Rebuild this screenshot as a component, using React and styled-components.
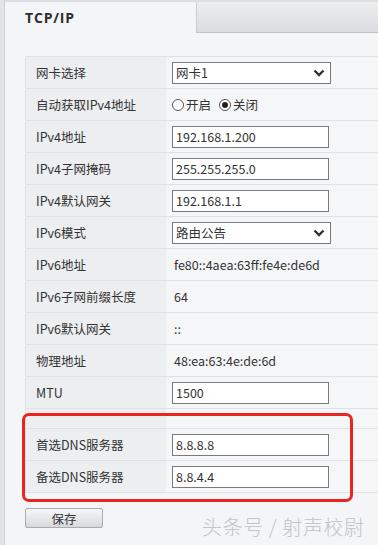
import React from 'react';
import styled, { createGlobalStyle } from 'styled-components';

const GlobalStyle = createGlobalStyle`
    html, body {
        margin: 0;
        padding: 0;
        background: #f4f5f7;
        overflow: hidden;
    }
    * { box-sizing: border-box; }
`

const font = `"Noto Sans CJK SC", "Open Sans", sans-serif`

const rows = [
    { label: '网卡选择', type: 'select', value: '网卡1' },
    { label: '自动获取IPv4地址', type: 'radio' },
    { label: 'IPv4地址', type: 'input', value: '192.168.1.200' },
    { label: 'IPv4子网掩码', type: 'input', value: '255.255.255.0' },
    { label: 'IPv4默认网关', type: 'input', value: '192.168.1.1' },
    { label: 'IPv6模式', type: 'select', value: '路由公告' },
    { label: 'IPv6地址', type: 'text', value: 'fe80::4aea:63ff:fe4e:de6d' },
    { label: 'IPv6子网前缀长度', type: 'text', value: '64' },
    { label: 'IPv6默认网关', type: 'text', value: '::' },
    { label: '物理地址', type: 'text', value: '48:ea:63:4e:de:6d' },
    { label: 'MTU', type: 'input', value: '1500' }
]

const dns = [
    { label: '首选DNS服务器', type: 'input', value: '8.8.8.8' },
    { label: '备选DNS服务器', type: 'input', value: '8.8.4.4' }
]

export default function App() {
    return (
        <Page>
            <GlobalStyle />
            <SideStrip />
            <Main>
                <TabBar>
                    <Tab>TCP/IP</Tab>
                    <TabRest />
                </TabBar>
                <Content>
                    <Table>
                        {rows.map((row, i) => (
                            <Row key={i} row={row} />
                        ))}
                        <EmptyRow><Label /><Cell /></EmptyRow>
                        <DnsGroup>
                            {dns.map((row, i) => (
                                <Row key={i} row={row} />
                            ))}
                        </DnsGroup>
                    </Table>
                    <Footer>
                        <SaveBtn>保存</SaveBtn>
                        <Watermark>头条号 / 射声校尉</Watermark>
                    </Footer>
                </Content>
            </Main>
        </Page>
    );
}

function Row({ row }) {
    return (
        <TableRow>
            <Label>{row.label}</Label>
            <Cell>
                {row.type === 'select' && (
                    <Select>
                        <span>{row.value}</span>
                        <svg width="12" height="8" viewBox="0 0 12 8">
                            <path d="M1.5 1.5 L6 6 L10.5 1.5" fill="none" stroke="#333" strokeWidth="2.4" />
                        </svg>
                    </Select>
                )}
                {row.type === 'input' && <Input>{row.value}</Input>}
                {row.type === 'text' && <Plain>{row.value}</Plain>}
                {row.type === 'radio' && (
                    <Radios>
                        <RadioItem><RadioDot /> 开启</RadioItem>
                        <RadioItem><RadioDot checked /> 关闭</RadioItem>
                    </Radios>
                )}
            </Cell>
        </TableRow>
    )
}

const Page = styled.div`
    display: flex;
    width: 378px;
    height: 545px;
    font-family: ${font};
    color: #333;
`
const SideStrip = styled.div`
    width: 5px;
    flex-shrink: 0;
    background: #e3e4e6;
    border-right: 1px solid #cfd1d4;
`
const Main = styled.div`
    flex: 1;
    display: flex;
    flex-direction: column;
    min-width: 0;
`
const TabBar = styled.div`
    display: flex;
    height: 33px;
    border-top: 2px solid #dcdee1;
`
const Tab = styled.div`
    width: 191px;
    padding: 6px 0 0 20px;
    font-family: "Open Sans", "DejaVu Sans", sans-serif;
    font-weight: 700;
    font-size: 14px;
    letter-spacing: 0.8px;
    color: #2e2e2e;
    background: #f4f5f7;
`
const TabRest = styled.div`
    flex: 1;
    background: linear-gradient(#eceef0, #d9dbde);
    border-left: 1px solid #c9cbce;
    border-bottom: 1px solid #bfc1c4;
`
const Content = styled.div`
    padding: 23px 0 0 20px;
    flex: 1;
    display: flex;
    flex-direction: column;
`
const Table = styled.div`
    display: flex;
    flex-direction: column;
    border-top: 1px solid #dfe1e4;
    border-left: 1px solid #dfe1e4;
`
const TableRow = styled.div`
    display: grid;
    grid-template-columns: 140px 1fr;
    height: 32px;
    border-bottom: 1px solid #dfe1e4;
`
const EmptyRow = styled(TableRow)`
    height: 20px;
`
const Label = styled.div`
    display: flex;
    align-items: center;
    padding-left: 10px;
    font-size: 12.5px;
    background: #eceef0;
    white-space: nowrap;
`
const Cell = styled.div`
    display: flex;
    align-items: center;
    padding-left: 6px;
    background: #f5f6f8;
    font-size: 12.5px;
`
const Select = styled.div`
    width: 159px;
    height: 22px;
    display: flex;
    align-items: center;
    justify-content: space-between;
    padding: 0 5px 0 3px;
    background: #fff;
    border: 1px solid #7a7a7a;
`
const Input = styled.div`
    width: 157px;
    height: 22px;
    display: flex;
    align-items: center;
    padding-left: 3px;
    background: #fff;
    border: 1px solid #7a7a7a;
`
const Plain = styled.div`
    padding-left: 2px;
`
const Radios = styled.div`
    display: flex;
    align-items: center;
    gap: 8px;
`
const RadioItem = styled.label`
    display: flex;
    align-items: center;
    gap: 2px;
`
const RadioDot = styled.span`
    width: 12px;
    height: 12px;
    border-radius: 50%;
    border: 1px solid #555;
    background: #fff;
    display: flex;
    align-items: center;
    justify-content: center;
    &::after {
        content: '';
        width: 6px;
        height: 6px;
        border-radius: 50%;
        background: ${p => (p.checked ? '#222' : 'transparent')};
    }
`
const DnsGroup = styled.div`
    position: relative;
    display: flex;
    flex-direction: column;
    &::after {
        content: '';
        position: absolute;
        left: -4px;
        top: -16px;
        width: 325px;
        bottom: -9px;
        border: 3px solid #e8251f;
        border-radius: 7px;
        pointer-events: none;
    }
`
const Footer = styled.div`
    display: flex;
    align-items: flex-start;
    margin-top: 15px;
`
const SaveBtn = styled.button`
    width: 78px;
    height: 20px;
    padding: 0;
    font-family: ${font};
    font-size: 12.5px;
    color: #333;
    border: 1px solid #a9abae;
    border-radius: 2px;
    background: linear-gradient(#f7f7f8, #d7d9dc);
    display: flex;
    align-items: center;
    justify-content: center;
`
const Watermark = styled.div`
    margin: 4px 0 0 99px;
    font-size: 20px;
    font-weight: 300;
    color: #c4c4c4;
    white-space: nowrap;
    letter-spacing: 0.6px;
`
